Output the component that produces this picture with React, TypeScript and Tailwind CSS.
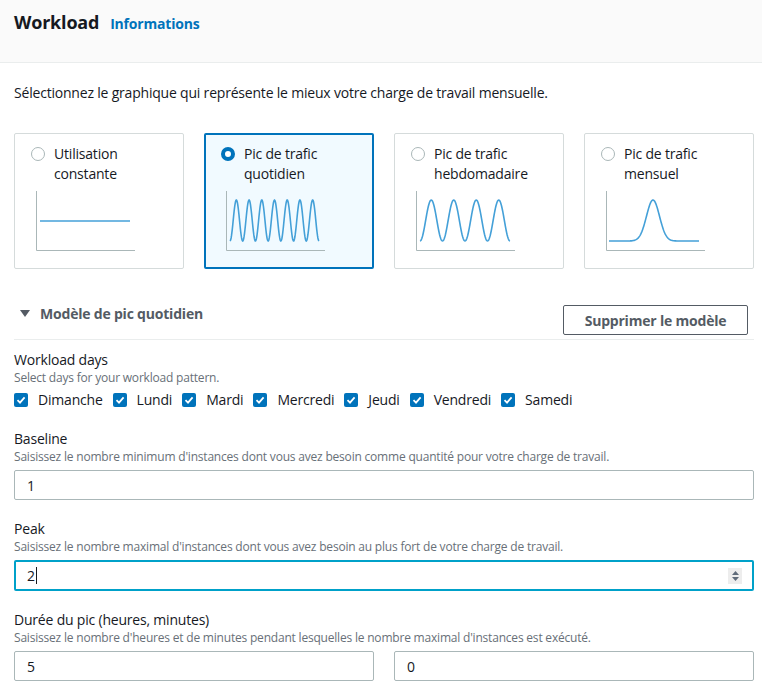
import React from "react";

const AXIS = "#aab7b8";
const WAVE = "#44a0d8";

type Pattern = "constant" | "daily" | "weekly" | "monthly";

function wavePath(periods: number, x0: number, x1: number, top: number, bottom: number) {
  const pts: string[] = [];
  const mid = (top + bottom) / 2;
  const amp = (bottom - top) / 2;
  const steps = 240;
  for (let i = 0; i <= steps; i++) {
    const t = i / steps;
    const x = x0 + (x1 - x0) * t;
    const y = mid + amp * Math.cos(t * periods * Math.PI * 2);
    pts.push(`${i === 0 ? "M" : "L"}${x.toFixed(2)},${y.toFixed(2)}`);
  }
  return pts.join(" ");
}

function bellPath(x0: number, x1: number, center: number, top: number, bottom: number, sigma: number) {
  const pts: string[] = [];
  const steps = 200;
  for (let i = 0; i <= steps; i++) {
    const x = x0 + ((x1 - x0) * i) / steps;
    const y = bottom - (bottom - top) * Math.exp(-((x - center) ** 2) / (2 * sigma * sigma));
    pts.push(`${i === 0 ? "M" : "L"}${x.toFixed(2)},${y.toFixed(2)}`);
  }
  return pts.join(" ");
}

const Chart = ({ pattern }: { pattern: Pattern }) => {
  let d = "";
  if (pattern === "constant") d = "M4,30 L94,30";
  if (pattern === "daily") d = wavePath(7, 4, 93, 9, 50);
  if (pattern === "weekly") d = wavePath(4, 4, 94, 9, 50);
  if (pattern === "monthly") d = bellPath(3, 93, 47, 9, 50, 6.5);
  return (
    <svg width="100" height="60" viewBox="0 0 100 60" className="block">
      <path d="M0.5,0 L0.5,59.5 L99,59.5" fill="none" stroke={AXIS} strokeWidth="1" />
      <path d={d} fill="none" stroke={WAVE} strokeWidth="1.6" />
    </svg>
  );
};

const Radio = ({ checked }: { checked: boolean }) =>
  checked ? (
    <span className="mt-[3px] h-[14px] w-[14px] shrink-0 rounded-full border-[4px] border-[#0073bb] bg-white" />
  ) : (
    <span className="mt-[3px] h-[14px] w-[14px] shrink-0 rounded-full border-[1.5px] border-[#aab7b8] bg-white" />
  );

const PatternCard = ({
  label,
  pattern,
  selected,
}: {
  label: string;
  pattern: Pattern;
  selected?: boolean;
}) => (
  <div
    className={
      selected
        ? "flex h-[136px] flex-col rounded-[2px] border-2 border-[#0073bb] bg-[#f1faff] px-[15px] pt-[9px]"
        : "flex h-[136px] flex-col rounded-[2px] border border-[#d5dbdb] bg-white px-[16px] pt-[10px]"
    }
  >
    <div className="flex gap-[9px]">
      <Radio checked={!!selected} />
      <span className="w-[100px] text-[14px] leading-[20px] text-[#16191f]">{label}</span>
    </div>
    <div className="ml-[5px] mt-[7px]">
      <Chart pattern={pattern} />
    </div>
  </div>
);

const Check = ({ label }: { label: string }) => (
  <label className="flex items-center gap-[10px]">
    <span className="flex h-[14px] w-[14px] items-center justify-center rounded-[2px] bg-[#0073bb]">
      <svg width="10" height="10" viewBox="0 0 10 10">
        <path d="M1.5,5.2 L4,7.6 L8.6,2.4" fill="none" stroke="white" strokeWidth="1.8" />
      </svg>
    </span>
    <span className="text-[14px] leading-[20px] text-[#16191f]">{label}</span>
  </label>
);

const Field = ({
  label,
  hint,
  children,
}: {
  label: string;
  hint: string;
  children: React.ReactNode;
}) => (
  <div className="flex flex-col">
    <span className="text-[14px] leading-[20px] text-[#16191f]">{label}</span>
    <span className="text-[12px] leading-[16px] text-[#687078]">{hint}</span>
    <div className="mt-[5px]">{children}</div>
  </div>
);

const TextBox = ({ value }: { value: string }) => (
  <div className="flex h-[30px] items-center rounded-[2px] border border-[#aab7b8] bg-white px-[12px] text-[14px] text-[#16191f]">
    {value}
  </div>
);

export default function App() {
  const days = ["Dimanche", "Lundi", "Mardi", "Mercredi", "Jeudi", "Vendredi", "Samedi"];

  return (
    <div className="min-h-[690px] w-[762px] bg-white font-['Open_Sans',sans-serif] tracking-[-0.2px]">
      <header className="h-[63px] border-b border-[#eaeded] bg-[#fafafa] px-[14px] pt-[10px]">
        <div className="flex items-baseline gap-[11px]">
          <h2 className="text-[18px] font-bold leading-[24px] text-[#16191f]">Workload</h2>
          <a className="text-[14px] font-bold text-[#0073bb]">Informations</a>
        </div>
      </header>

      <div className="pl-[14px] pr-[8px]">
        <p className="mt-[20px] text-[14px] leading-[20px] text-[#16191f]">
          Sélectionnez le graphique qui représente le mieux votre charge de travail mensuelle.
        </p>

        <div className="mt-[30px] grid grid-cols-4 gap-[20px]">
          <PatternCard label="Utilisation constante" pattern="constant" />
          <PatternCard label="Pic de trafic quotidien" pattern="daily" selected />
          <PatternCard label="Pic de trafic hebdomadaire" pattern="weekly" />
          <PatternCard label="Pic de trafic mensuel" pattern="monthly" />
        </div>

        <div className="mt-[35px] flex items-start justify-between pr-[6px]">
          <div className="flex items-center gap-[10px] pl-[6px]">
            <svg width="10" height="8" viewBox="0 0 10 8">
              <path d="M0,0 L10,0 L5,7 Z" fill="#545b64" />
            </svg>
            <span className="text-[14px] font-bold leading-[20px] text-[#545b64]">
              Modèle de pic quotidien
            </span>
          </div>
          <button className="mt-[1px] h-[30px] w-[185px] rounded-[2px] border border-[#545b64] bg-white text-[14px] font-bold text-[#545b64]">
            Supprimer le modèle
          </button>
        </div>

        <div className="mt-[4px] border-t border-[#eaeded]" />

        <div className="mt-[10px] flex flex-col gap-[19px]">
          <div className="flex flex-col">
            <span className="text-[14px] leading-[20px] text-[#16191f]">Workload days</span>
            <span className="text-[12px] leading-[16px] text-[#687078]">
              Select days for your workload pattern.
            </span>
            <div className="mt-[4px] flex h-[20px] items-center gap-[10px]">
              {days.map((d) => (
                <Check key={d} label={d} />
              ))}
            </div>
          </div>

          <Field
            label="Baseline"
            hint="Saisissez le nombre minimum d'instances dont vous avez besoin comme quantité pour votre charge de travail."
          >
            <TextBox value="1" />
          </Field>

          <Field
            label="Peak"
            hint="Saisissez le nombre maximal d'instances dont vous avez besoin au plus fort de votre charge de travail."
          >
            <div className="flex h-[31px] items-center justify-between rounded-[2px] border-2 border-[#00a1c9] bg-white pl-[11px] pr-[10px] text-[14px] text-[#16191f]">
              <span className="flex items-center">
                2<span className="ml-[1px] h-[17px] w-px bg-[#16191f]" />
              </span>
              <span className="flex h-[16px] w-[14px] flex-col items-center justify-center gap-[2px] bg-[#ededed]">
                <svg width="7" height="4" viewBox="0 0 7 4">
                  <path d="M0,4 L7,4 L3.5,0 Z" fill="#5f6b7a" />
                </svg>
                <svg width="7" height="4" viewBox="0 0 7 4">
                  <path d="M0,0 L7,0 L3.5,4 Z" fill="#5f6b7a" />
                </svg>
              </span>
            </div>
          </Field>

          <Field
            label="Durée du pic (heures, minutes)"
            hint="Saisissez le nombre d'heures et de minutes pendant lesquelles le nombre maximal d'instances est exécuté."
          >
            <div className="grid grid-cols-2 gap-[20px]">
              <TextBox value="5" />
              <TextBox value="0" />
            </div>
          </Field>
        </div>
      </div>
    </div>
  );
}
